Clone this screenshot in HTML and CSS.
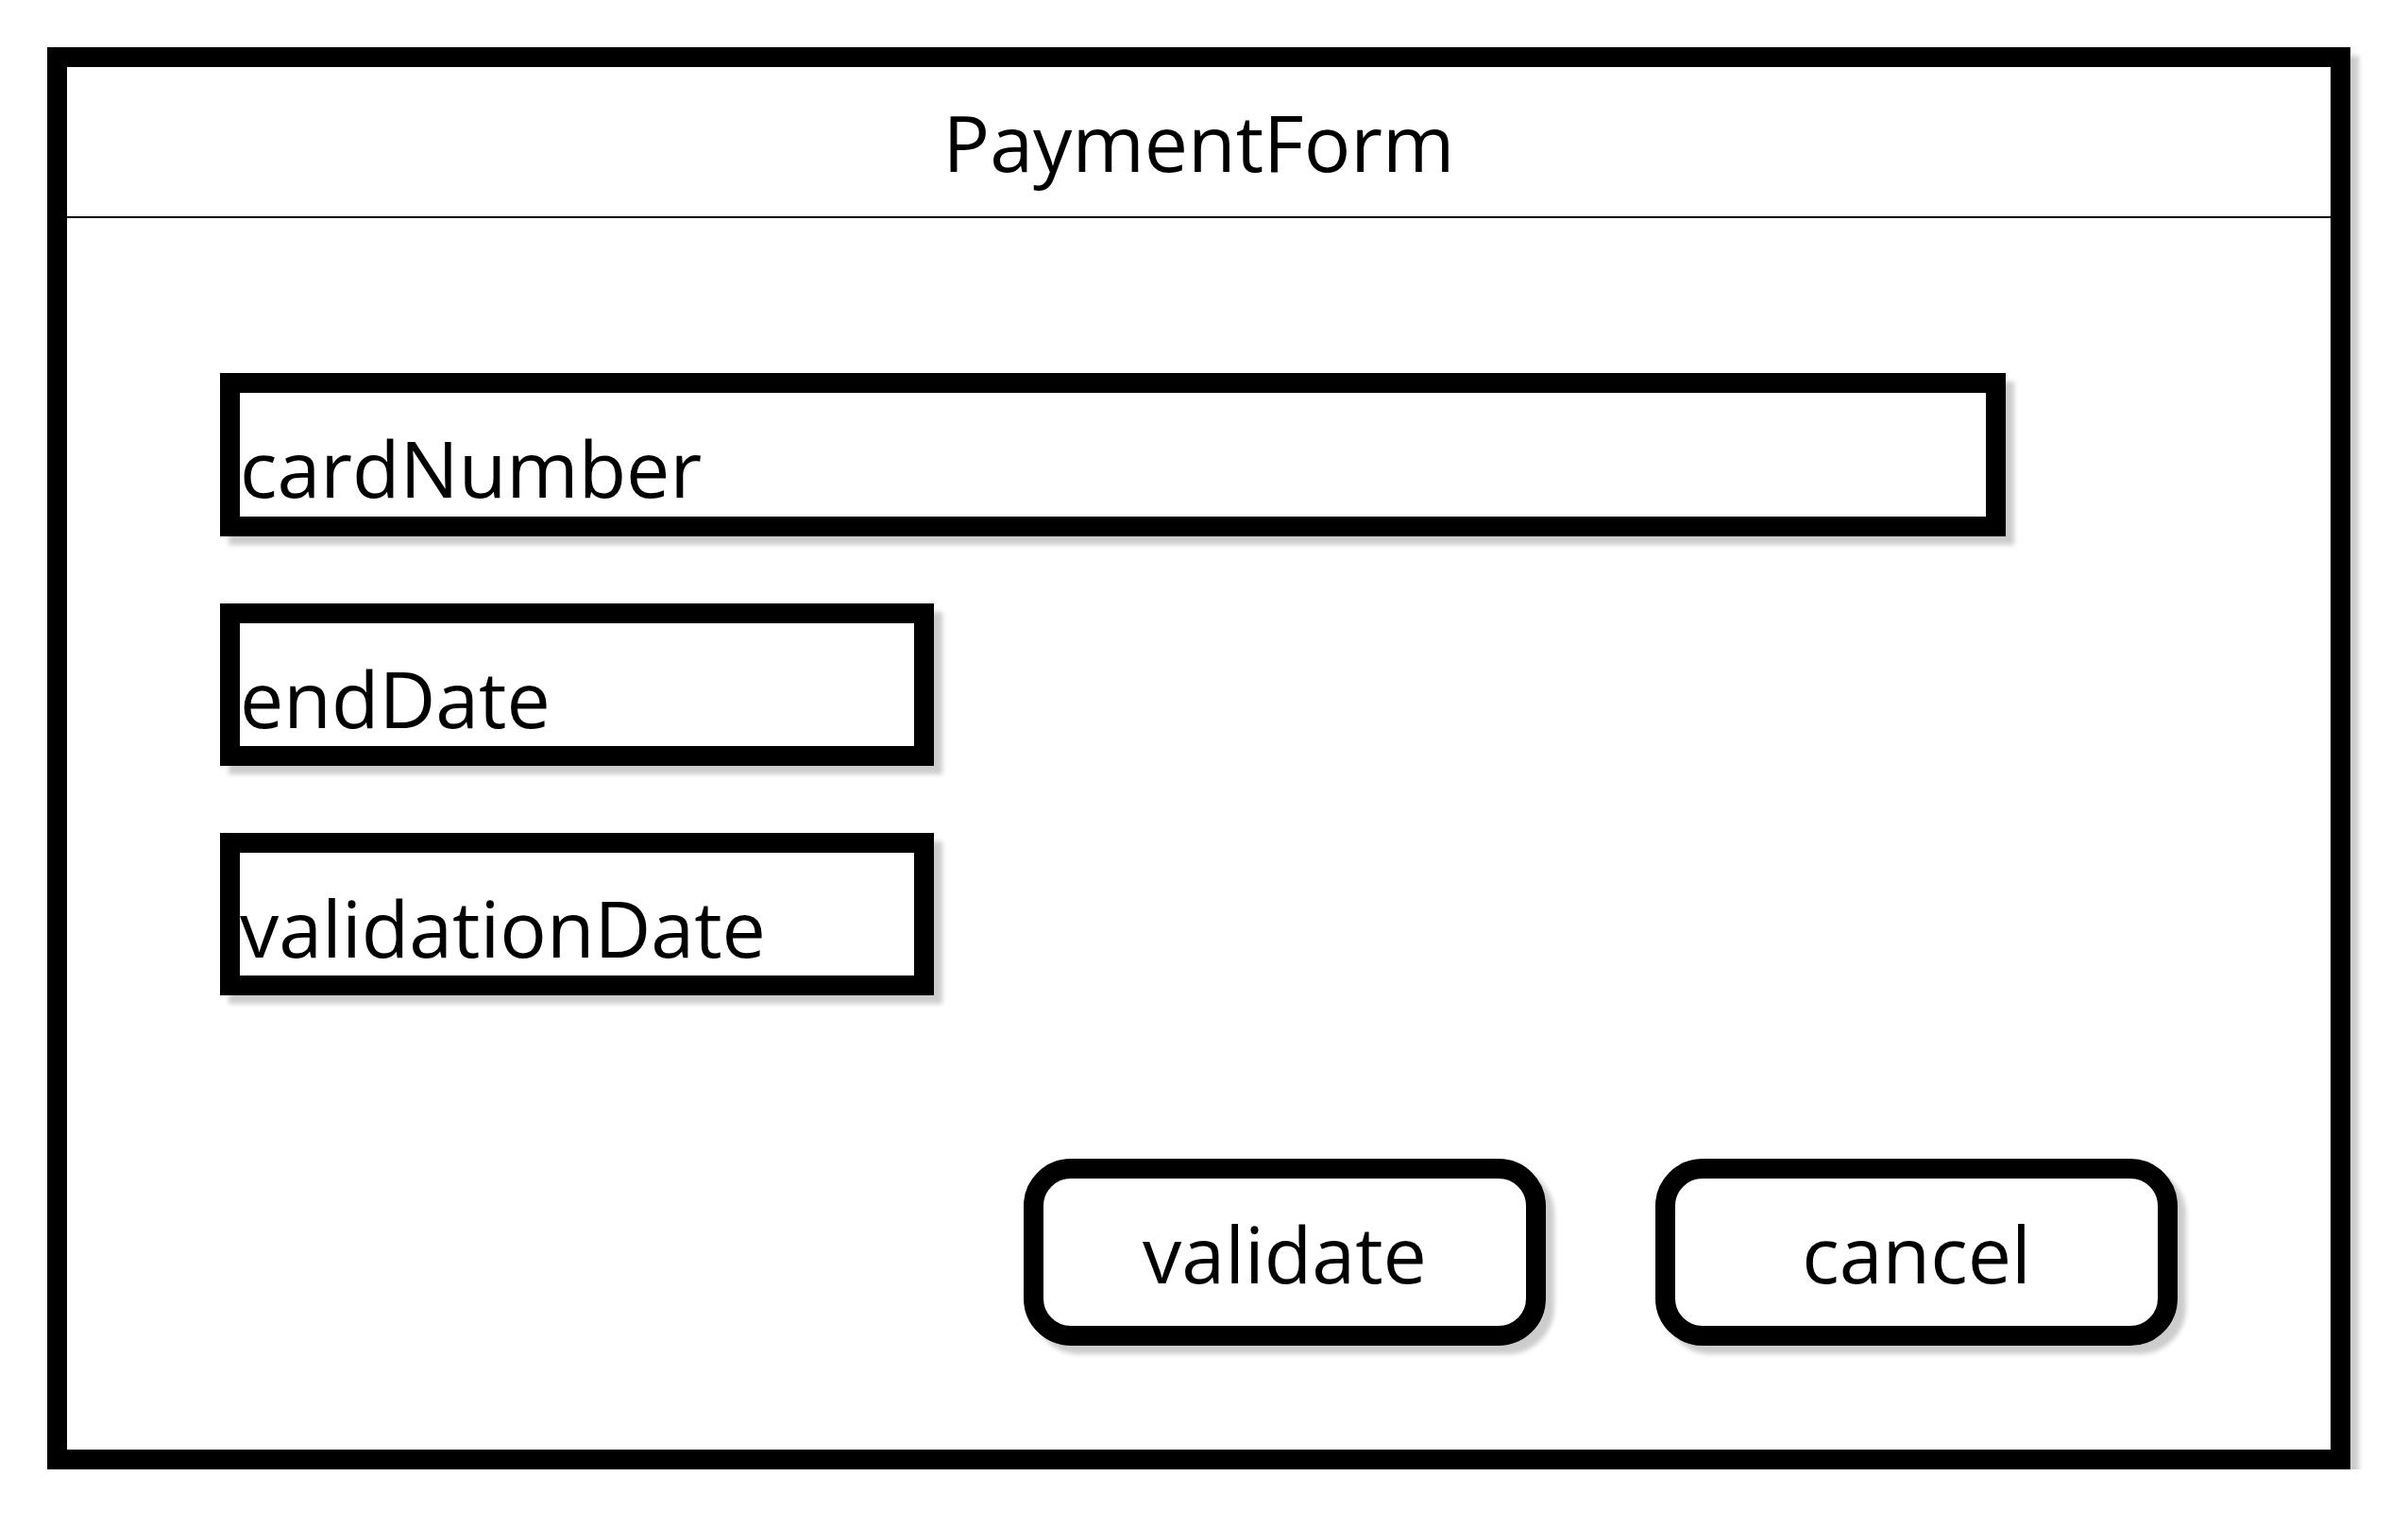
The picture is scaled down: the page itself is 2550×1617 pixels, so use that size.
FILE: index.html
```html
<!DOCTYPE html>
<html lang="en">
<head>
  <meta charset="UTF-8" />
  <title>PaymentForm</title>
  <link rel="stylesheet" href="styles.css">
</head>
<body>

  <div class="frame">
    <div class="frame-title">PaymentForm</div>

    <div class="frame-body">
      <!-- Input fields -->
      <div class="fields">
        <div class="field field-wide">cardNumber</div>
        <div class="field">endDate</div>
        <div class="field">validationDate</div>
      </div>

      <!-- Actions -->
      <div class="actions">
        <div class="btn">validate</div>
        <div class="btn">cancel</div>
      </div>
    </div>
  </div>

</body>
</html>
```

FILE: styles.css
```css
body {
  margin: 0;
  background: #fff;
  color: #000;
  font-family: "Open Sans", "Noto Sans", sans-serif;
  font-size: 82.5px;
}

.frame {
  margin: 50px 0 0 50px;
  width: 2439px;
  height: 1506px;
  box-sizing: border-box;
  border: 21px solid #000;
  box-shadow: 9px 9px 5px rgba(0, 0, 0, 0.2);
  display: flex;
  flex-direction: column;
}

.frame-title {
  height: 134px;
  padding-top: 24px;
  line-height: 110px;
  border-bottom: 2px solid #000;
  text-align: center;
}

.frame-body {
  flex: 1;
  padding: 164px 162px 0 162px;
  display: flex;
  flex-direction: column;
}

/* Input fields */
.fields {
  display: flex;
  flex-direction: column;
  align-items: flex-start;
  gap: 71px;
}

.field {
  width: 756px;
  height: 172px;
  box-sizing: border-box;
  border: 21px solid #000;
  padding: 24px 0 0 0;
  line-height: 110px;
  white-space: nowrap;
  box-shadow: 9px 9px 5px rgba(0, 0, 0, 0.2);
}

.field-wide {
  width: 1891px;
  height: 173px;
}

/* Buttons */
.actions {
  margin-top: 173px;
  display: flex;
  justify-content: flex-end;
  gap: 116px;
}

.btn {
  width: 553px;
  height: 198px;
  box-sizing: border-box;
  border: 21px solid #000;
  border-radius: 50px;
  padding-top: 24px;
  line-height: 110px;
  text-align: center;
  box-shadow: 9px 9px 5px rgba(0, 0, 0, 0.2);
}
```
